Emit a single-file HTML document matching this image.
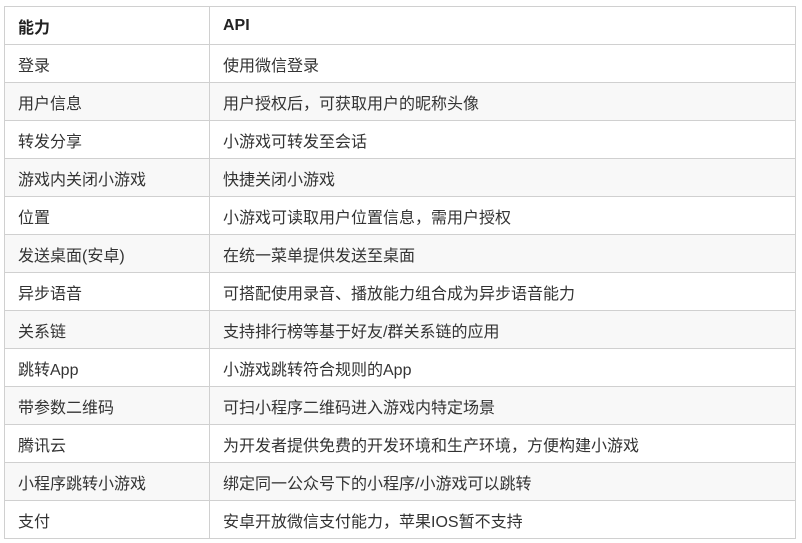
<!DOCTYPE html>
<html><head><meta charset="utf-8"><style>
html,body{margin:0;padding:0;background:#fff;width:802px;height:543px;overflow:hidden}
table{position:absolute;left:4px;top:6px;border-collapse:collapse;width:792px;font-family:"Liberation Sans","Noto Sans CJK SC",sans-serif;font-size:16px;color:#333}
td,th{border:1px solid #d0d0d0;height:37px;padding:0 0 0 13px;text-align:left;box-sizing:border-box}
th{font-weight:bold;color:#222}
td:first-child,th:first-child{width:205px}
tr:nth-child(odd) td{background:#f8f8f8}
tr{height:38px}
</style></head><body>
<table>
<tr><th>能力</th><th>API</th></tr>
<tr><td>登录</td><td>使用微信登录</td></tr>
<tr><td>用户信息</td><td>用户授权后，可获取用户的昵称头像</td></tr>
<tr><td>转发分享</td><td>小游戏可转发至会话</td></tr>
<tr><td>游戏内关闭小游戏</td><td>快捷关闭小游戏</td></tr>
<tr><td>位置</td><td>小游戏可读取用户位置信息，需用户授权</td></tr>
<tr><td>发送桌面(安卓)</td><td>在统一菜单提供发送至桌面</td></tr>
<tr><td>异步语音</td><td>可搭配使用录音、播放能力组合成为异步语音能力</td></tr>
<tr><td>关系链</td><td>支持排行榜等基于好友/群关系链的应用</td></tr>
<tr><td>跳转App</td><td>小游戏跳转符合规则的App</td></tr>
<tr><td>带参数二维码</td><td>可扫小程序二维码进入游戏内特定场景</td></tr>
<tr><td>腾讯云</td><td>为开发者提供免费的开发环境和生产环境，方便构建小游戏</td></tr>
<tr><td>小程序跳转小游戏</td><td>绑定同一公众号下的小程序/小游戏可以跳转</td></tr>
<tr><td>支付</td><td>安卓开放微信支付能力，苹果IOS暂不支持</td></tr>
</table>
</body></html>
